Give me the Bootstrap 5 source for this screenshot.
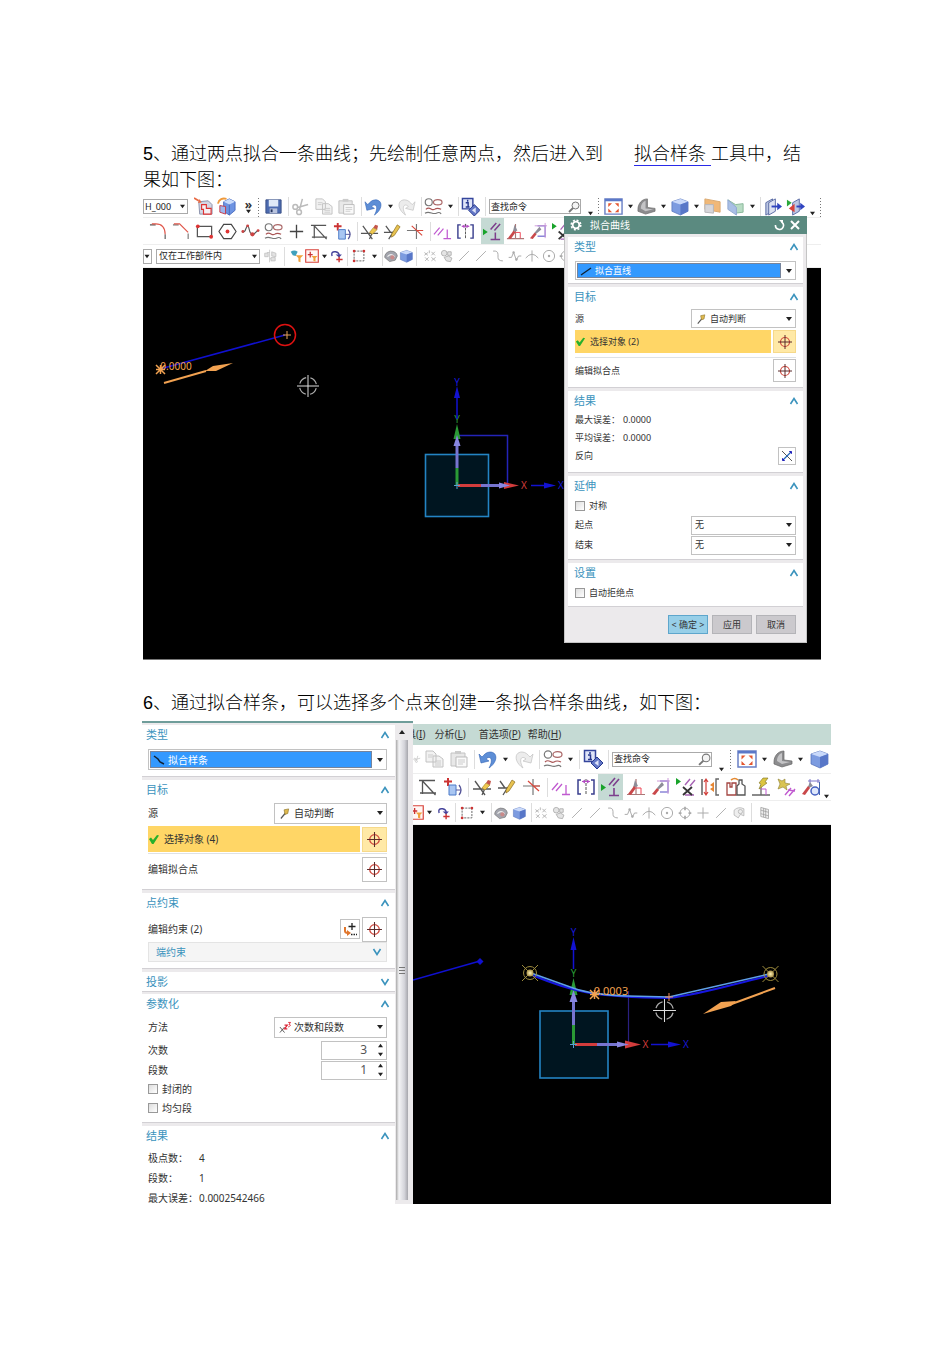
<!DOCTYPE html>
<html lang="zh-CN">
<head>
<meta charset="utf-8">
<meta name="viewport" content="width=device-width, initial-scale=1">
<title>拟合曲线</title>
<link href="https://cdn.jsdelivr.net/npm/bootstrap@5.3.0/dist/css/bootstrap.min.css" rel="stylesheet">
<style>
body{font-family:"Noto Sans","Noto Sans CJK SC",sans-serif;color:#333;background:#fff}
.sheet{padding:141px 119px 141px 143px}
.prose{font:300 18px/26px "Liberation Sans","Noto Sans CJK SC",sans-serif;color:#000;margin:0}
.prose-a{padding-right:20px;margin-bottom:3px}
.prose-b{margin:30px 0 5px}
.prose a{color:#000;text-decoration:none;border-bottom:1px solid #2a2ae8;margin-left:31px;padding-bottom:1px;white-space:pre}
.shot-a{margin-right:10px;border-bottom:1px solid #777}
.shot-a,.shot-b{overflow:hidden}
.shot-b{margin-left:-1px}
/* toolbars */
.strip{--b:23px;--c:10px;--i:19px;--s:15px;--sm:17px;--fs:9px;height:24px;background:#fff;border-bottom:1px solid #eee;white-space:nowrap;overflow:hidden}
.shot-b .strip{--b:25px;--c:11px;--i:20px;--s:17px;--sm:18px;--fs:10px;height:27px}
.strip>*{flex:none}
.strip button{border:0;background:none;padding:0;display:flex;align-items:center;justify-content:center;width:var(--b);height:100%}
.strip button svg{width:var(--i);height:var(--i)}
.strip button.s{width:var(--s)}
.strip button.s svg,.strip button.g svg{width:14px;height:14px}
.strip button.g{width:var(--sm)}
.strip button.m{width:21px}
.strip button.cr{width:var(--c)}
.strip button.cr svg{width:5px;height:5px}
.strip button.low{align-items:end;padding-bottom:1px}
.strip button.cutoff{width:8px;justify-content:end;overflow:hidden}
.strip button.on{background:#c5dad4}
.bar{width:4px;height:19px;border-right:1px solid #ddd;margin-right:0}
.grip{width:7px;height:20px;background:radial-gradient(circle,#777 0 1px,transparent 1px) 50% 0/3px 3px repeat-y}
.more{width:13px;font-size:12px;line-height:9px;font-weight:700;text-align:center}
.boxed{border:1px solid #aaa;height:15px;display:flex;align-items:center;background:#fff;font-size:var(--fs)}
.boxed select,.boxed input{border:0;background:none;appearance:none;outline:0;padding:0 0 0 1px;flex:1;min-width:0;color:#222;font-size:var(--fs);line-height:12px}
.boxed.range select{padding-left:2px}
.boxed svg{flex:none}
.seek{width:92px;margin-left:3px}
.seek input{font-size:9px}
.shot-b .seek{width:100px}
/* dialogs */
.dlg{--fs:9px;font-size:var(--fs);line-height:14px;background:#eceaec;color:#333}
.dlg-a{position:absolute;top:20px;right:14px;width:243px;border:1px solid #c4c4c4;border-top:0;padding-bottom:8px}
.dlg-b{--fs:10px;width:271px;border-top:2px solid #6f9d9a;flex:none;height:483px;overflow:hidden;padding-top:2px}
.cap{height:18px;background:#5b8a80;color:#fff;font-size:10px;padding:0 5px 0 6px;margin:0 -1px}
.cap button{border:0;background:none;padding:0;display:flex;width:15px;height:14px;align-items:center;justify-content:center}
.sec{background:#fff;padding:0 7px 4px;border-bottom:1px solid #d2d0d4;margin-bottom:3px}
.dlg-a .sec{margin:3px}
.dlg-a .sec.kind{padding-bottom:3px}
.dlg-a .sec.errs{padding-bottom:7px}
.sec h2{font-size:11px;line-height:20px;color:#3b93bd;margin:0 -3px 0 -1px;font-weight:400;display:flex;justify-content:space-between;align-items:center}
.dlg-b .sec h2{margin-left:-2px}
.dlg-b .sec{padding:0 8px 5px 6px}
.dlg-b .sec.kind{padding-bottom:6px}
.dlg-b .sec.folded{padding-bottom:0;margin-bottom:2px}
.dlg-b .sec.folded h2{line-height:19px}
.line{display:flex;align-items:center;justify-content:space-between}
.h-18{height:18px}.h-19{height:19px}.h-20{height:20px}.h-23{height:23px}.h-26{height:26px}.h-31{height:31px}
.pick{display:flex;align-items:center;border:1px solid #c2c2c2;background:#fff;height:19px;padding-right:3px;width:105px}
.dlg-b .pick{height:21px;width:113px}
.dlg .pick.wide{width:100%}
.pick .hold{flex:1;display:flex;align-items:center;height:100%;min-width:0;padding-left:4px}
.pick select{appearance:none;border:0;background:none;flex:1;min-width:0;padding:0 0 0 3px;outline:0;font-size:var(--fs);line-height:14px;color:#333}
.pick.bare .hold{padding-left:0}
.pick.wide .hold{background:#3399ff;border:1px solid #76849c;margin:1px 5px 1px 1px;height:15px;padding-left:2px}
.dlg-b .pick.wide .hold{height:17px}
.pick.wide select{color:#fff}
.chosen{background:#ffd666;flex:1;height:100%;display:flex;align-items:center;gap:4px;margin-right:2px}
.aim{width:23px;height:23px;border:1px solid #c2c2c2;background:#fff;padding:0;display:flex;align-items:center;justify-content:center;flex:none}
.dlg-b .aim{width:25px;height:25px}
.aim.lit{background:#ffe9a6;border-color:#f6d98a}
.aim.tiny{width:18px;height:18px}
.dlg-b .aim.tiny{width:20px;height:20px}
.tick{appearance:none;width:10px;height:10px;border:1px solid #999;background:linear-gradient(135deg,#ddd,#fff);margin:0 4px 0 0;flex:none}
.foot{padding:5px 10px 0 0}
.foot button{width:40px;height:19px;font-size:9px;line-height:14px;border:1px solid #b4b4b8;background:#cbc9cd;color:#333;padding:0;border-radius:0}
.foot button.main{background:#97cfe8;border-color:#5ea6cc}
.sub{height:20px;border:1px solid #e4e4e4;background:#f5f5f5;color:#3b93bd;padding:0 4px 0 7px}
.spin{width:66px;height:19px;border:1px solid #c2c2c2;display:flex;align-items:center;padding-right:3px}
.spin input{flex:1;min-width:0;border:0;outline:0;text-align:right;font-size:12px;line-height:14px;color:#555;padding:0 11px 0 0;appearance:none}
.k{width:51px}
.ka{width:48px}
.rail{width:12px;flex:none;background:linear-gradient(90deg,#aaa,#f4f4f6 25%,#d4d4da 70%,#a6a6ac);margin:0 5px 4px 1px;border-top:15px solid #eceaec;position:relative}
.rail svg{position:absolute;left:3px;top:-11px}
.rail i{position:absolute;left:3px;top:227px;width:6px;height:7px;background:repeating-linear-gradient(#777 0 1px,transparent 1px 3px)}
.menus{background:#c5dad4;height:21px;margin-top:3px;font-size:10px;overflow:hidden;white-space:nowrap}
.menus a{color:#333;text-decoration:none}
.scene{display:block;width:100%;background:#000;flex:none}
</style>
<script src="https://cdn.jsdelivr.net/npm/bootstrap@5.3.0/dist/js/bootstrap.bundle.min.js"></script>
</head>
<body>
<svg width="0" height="0" class="position-absolute" aria-hidden="true">
<defs>
<linearGradient id="gb" x1="0" y1="0" x2="1" y2="1"><stop stop-color="#d5e3fb"/><stop offset="1" stop-color="#6f93dc"/></linearGradient>
<linearGradient id="gg" x1="0" y1="0" x2="0" y2="1"><stop stop-color="#bbb"/><stop offset="1" stop-color="#666"/></linearGradient>
<radialGradient id="gy"><stop stop-color="#fff3b8"/><stop offset="1" stop-color="#a58d45"/></radialGradient>
</defs>
<symbol id="dn" viewBox="0 0 6 6"><path d="M0 1h6L3 5z" fill="#222"/></symbol>
<symbol id="up" viewBox="0 0 6 6"><path d="M0 5h6L3 1z" fill="#222"/></symbol>
<symbol id="chev" viewBox="0 0 10 8"><path d="M1.500 7L5 1.500 8.500 7" fill="none" stroke="#3b93bd" stroke-width="1.600"/></symbol>
<symbol id="asm" viewBox="0 0 20 20"><path d="M5 5l10-1 4 4v10H6z" fill="#d3d6e4" stroke="#8a90ab"/><path d="M8 8h5v4h5v6h-8v-5H8z" fill="#f6f0f4" stroke="#d33" stroke-width="1.200"/><path d="M0 1l5 3" stroke="#e86b45" stroke-width="1.800"/><path d="M6 2l2 4-4 0z" fill="#e86b45"/></symbol>
<symbol id="box3" viewBox="0 0 20 20"><path d="M7 5l6-3 6 3v9l-6 5-6-4z" fill="#6d93e2" stroke="#4a6dc0"/><path d="M7 5l6-3 6 3-6 3z" fill="#c9dbfb"/><path d="M13 8v11" fill="none" stroke="#4a6dc0"/><path d="M3 9l6 1v8l-6-2z" fill="#9fb6ee" stroke="#c43a4a"/><path d="M1 7c1-5 5-6 9-5" stroke="#ef9a3c" stroke-width="2" fill="none"/></symbol>
<symbol id="save" viewBox="0 0 20 20"><path d="M2 3h16v14H2z" fill="#4c6bb0" stroke="#3a4f86"/><path d="M5 3h10v7H5z" fill="#dfe9f7"/><path d="M6 12h8v5H6z" fill="#b9c3dd"/><path d="M7 13h2v3H7z" fill="#26365f"/></symbol>
<symbol id="cut" viewBox="0 0 20 20"><g fill="none" stroke="#bbb" stroke-width="1.600"><path d="M12 2L9 13M18 8L7 11"/><circle cx="4.500" cy="10.500" r="2.500"/><circle cx="8.500" cy="16" r="2.500"/></g></symbol>
<symbol id="copy" viewBox="0 0 20 20"><path d="M2 2h7l3 3v8H2zM9 7h6l4 3v8H9z" fill="#f2f2f2" stroke="#c2c2c2"/><path d="M4 6h5M4 8h4M11 12h6M11 14h6M11 16h6" stroke="#ccc"/></symbol>
<symbol id="paste" viewBox="0 0 20 20"><path d="M2 4h14v13H2z" fill="#e8e8e8" stroke="#c2c2c2"/><path d="M6 2h6v3H6z" fill="#ccc"/><path d="M7 8h11v10H7z" fill="#fafafa" stroke="#bbb"/><path d="M9 11h7M9 13h7M9 15h5" stroke="#ccc"/></symbol>
<symbol id="undo" viewBox="0 0 20 20"><path d="M1 5l2 9 8-2-3-2c4-4 8 0 3 9 9-6 9-16 1-16-4 0-6 3-8 5z" fill="#5d8ed6" stroke="#2f62b5" stroke-width=".6"/></symbol>
<symbol id="redo" viewBox="0 0 20 20"><path d="M19 5l-2 9-8-2 3-2c-4-4-8 0-3 9-9-6-9-16-1-16 4 0 6 3 8 5z" fill="#ececec" stroke="#c6c6c6" stroke-width=".8"/></symbol>
<symbol id="curves" viewBox="0 0 20 20"><g fill="none" stroke="#777" stroke-width="1.200"><circle cx="5" cy="5.500" r="3.700"/><ellipse cx="14.500" cy="5.500" rx="4.500" ry="2.800" stroke="#a66"/><path d="M2 13c4-4 6 2 9 0s5-1 7 0" stroke="#a55"/><path d="M1 17c5-3 8 2 12 0 2-1 4-1 5 1"/></g></symbol>
<symbol id="info" viewBox="0 0 20 20"><path d="M1.500 1.500h11v11h-11z" fill="#dfe4f8" stroke="#34459c" stroke-width="1.500"/><path d="M7 3v2M5 6h2.500v4M5 10.500h4" stroke="#26378e" stroke-width="1.500" fill="none"/><path d="M14 8l6 6-6 6-6-6z" fill="#6377c6" stroke="#27398f"/><path d="M15.500 11v6l-4-3z" fill="#dfe4f8"/></symbol>
<symbol id="fit" viewBox="0 0 20 20"><path d="M1 2h18v16H1z" fill="#fff" stroke="#6a80c5" stroke-width="1.500"/><path d="M1 2h18v2.500H1z" fill="#5b78c8"/><path d="M4.500 10.500V6.500h4zM15.500 10.500V6.500h-4zM4.500 12v4h4zM15.500 12v4h-4z" fill="#e4562f"/></symbol>
<symbol id="wedge" viewBox="0 0 20 20"><path d="M1 13C1 7 5 2 11 2v9l8 1v3l-10 3-8-3z" fill="#8c8c8e" stroke="#666" stroke-width=".7"/><path d="M4 12c0-4 2-7 5-8v8l8 1-8 2z" fill="#c4c4c6"/></symbol>
<symbol id="cube" viewBox="0 0 20 20"><path d="M2 5l9-3 8 3v10l-8 4-9-4z" fill="#7c9be0" stroke="#4f6cb6" stroke-width=".7"/><path d="M2 5l9-3 8 3-8 3z" fill="#c9d9fa"/><path d="M11 8l8-3v10l-8 4z" fill="#5877c8"/></symbol>
<symbol id="pl1" viewBox="0 0 20 20"><path d="M2 2l16 3v11l-16-3z" fill="#f0b878" stroke="#d9a970"/><path d="M2 8h9v9l-9-1z" fill="#d6d6da" stroke="#b5b5b8"/></symbol>
<symbol id="pl2" viewBox="0 0 20 20"><path d="M2 3l8 5 8-1v9l-8 1z" fill="#b8dcc4" stroke="#88b79a"/><path d="M2 3l9 8v8l-9-6z" fill="#a9bfe6" stroke="#8fa6d2"/></symbol>
<symbol id="ex1" viewBox="0 0 20 20"><path d="M3 6l7-4v13l-7 4z" fill="#bcc7e4" stroke="#5a6aa3"/><path d="M6 6l7-4v13l-7 4z" fill="#dde2f2" stroke="#5a6aa3"/><path d="M9 10h7" stroke="#2f44c0" stroke-width="2"/><path d="M15 6l5 4-5 4z" fill="#2f44c0"/></symbol>
<symbol id="ex2" viewBox="0 0 20 20"><path d="M7 6l7-4v13l-7 4z" fill="#bcc7e4" stroke="#5a6aa3"/><path d="M11 10h5" stroke="#2f44c0" stroke-width="2"/><path d="M15 6l5 4-5 4z" fill="#2f44c0"/><path d="M1 3l5 3-5 4z" fill="#2aa83a"/><path d="M3 12l6-5v9z" fill="#d8423a"/></symbol>
<symbol id="fil" viewBox="0 0 20 20"><path d="M1 3h6M17 13v5" stroke="#555" stroke-width="1.200"/><path d="M3 2h4q10 0 10 11" stroke="#e0564a" stroke-width="1.200" fill="none"/></symbol>
<symbol id="cha" viewBox="0 0 20 20"><path d="M1 3h6M17 12v6" stroke="#777" stroke-width="1.200"/><path d="M2 2h6l9 9" stroke="#e0564a" stroke-width="1.200" fill="none"/></symbol>
<symbol id="rct" viewBox="0 0 20 20"><path d="M2.500 4.500h15v11h-15z" fill="none" stroke="#555" stroke-width="1.300"/><circle cx="3" cy="4.500" r="2" fill="#d33"/><circle cx="17" cy="15.500" r="2" fill="#d33"/></symbol>
<symbol id="hex" viewBox="0 0 20 20"><path d="M6 2.500h8l5 7.500-5 7.500H6L1 10z" fill="none" stroke="#444" stroke-width="1.200"/><circle cx="10" cy="10" r="2" fill="#d33"/></symbol>
<symbol id="spl" viewBox="0 0 20 20"><path d="M1 10c4 3 4-6 6-6s1 9 5 9 3-4 7-4" fill="none" stroke="#555" stroke-width="1.200"/><g fill="#c44"><circle cx="2" cy="10" r="1.500"/><circle cx="7" cy="4" r="1.500"/><circle cx="12" cy="13" r="2.200"/><circle cx="18" cy="9" r="1.500"/></g></symbol>
<symbol id="plus" viewBox="0 0 20 20"><path d="M10 3v14M3 10h14" stroke="#444" stroke-width="1.400"/></symbol>
<symbol id="tri" viewBox="0 0 20 20"><path d="M1 3.500h16M4.500 3v14M2 16h16M4.500 4l13 14" stroke="#555" stroke-width="1.300" fill="none"/></symbol>
<symbol id="off" viewBox="0 0 20 20"><path d="M1 4.500h8M5 1v8" stroke="#c33" stroke-width="2"/><path d="M6 8h7v10H6z" fill="#a9c6f2" stroke="#4c7bc8"/><path d="M16 8q4 5 0 10" stroke="#559" stroke-width="1.300" fill="none"/><path d="M13 13h5" stroke="#559"/></symbol>
<symbol id="tr1" viewBox="0 0 20 20"><path d="M1 12h18M3 4l10 14M10 18l4-9" stroke="#555" stroke-width="1.300" fill="none"/><path d="M10 11l4-5 4 2-5 5z" fill="#eec74f" stroke="#9a7c20" stroke-width=".6"/><path d="M14 6l2-3 3 1-1 4z" fill="#c4564a"/></symbol>
<symbol id="tr2" viewBox="0 0 20 20"><path d="M1 11h9M3 4l5 7M6 18l5-8" stroke="#555" stroke-width="1.300" fill="none"/><path d="M9 13L15 3l3 2-6 9-3 2z" fill="#e7c250" stroke="#8a6c20" stroke-width=".7"/></symbol>
<symbol id="crs" viewBox="0 0 20 20"><path d="M1 9h17M11 2v16" stroke="#777" stroke-width="1.200"/><path d="M6 4l11 10M11 9h7" stroke="#d9483b" stroke-width="1.200" fill="none"/></symbol>
<symbol id="pp" viewBox="0 0 20 20"><path d="M1 13l6-7M5 14l6-7" stroke="#c05ad0" stroke-width="1.300"/><path d="M15 8v9M11 17.500h8" stroke="#c05ad0" stroke-width="1.300"/></symbol>
<symbol id="mir" viewBox="0 0 20 20"><path d="M5 3H2v14h3M15 3h3v14h-3" fill="none" stroke="#3a3f8e" stroke-width="1.500"/><path d="M10 2v16" stroke="#555" stroke-dasharray="3 1"/><path d="M6 4.500h8" stroke="#b44dc4"/><path d="M9 2.500v4L6 4.500zM11 2.500v4l3-2z" fill="#b44dc4"/></symbol>
<symbol id="app" viewBox="0 0 20 20"><path d="M0 7l5 3.500L0 14z" fill="#18a32a"/><path d="M8 8l6-7M12 9l6-7" stroke="#7d3f8c" stroke-width="1.600"/><path d="M13 11v7M8 18.500h10" stroke="#7d3f8c" stroke-width="1.600"/></symbol>
<symbol id="br1" viewBox="0 0 20 20"><path d="M10 2v15M1 17.500h18" stroke="#a77" stroke-width="1.200"/><path d="M10 11h5v6" stroke="#e45" fill="none"/><path d="M9 3l3 6-5 2z" fill="#8d8d98"/><path d="M8 9l2 2-5 7-3-1z" fill="#c9484a"/></symbol>
<symbol id="br2" viewBox="0 0 20 20"><path d="M9 4h8v11H9" stroke="#8c86d8" stroke-width="1.500" fill="none"/><path d="M6 4h13M17 1v16" stroke="#cc9ad8"/><path d="M11 5l2 3-6 5-1-2z" fill="#8d8d98"/><path d="M6 11l2 2-4 5-3-1z" fill="#c9484a"/></symbol>
<symbol id="xpp" viewBox="0 0 20 20"><path d="M0 1l5 3.500L0 8z" fill="#18a32a"/><path d="M9 8l5-6M14 9l5-6M9 18h9" stroke="#a763b4" stroke-width="1.400" fill="none"/><path d="M7 10l9 8M16 10l-9 8" stroke="#333" stroke-width="1.800"/></symbol>
<symbol id="rbr" viewBox="0 0 20 20"><path d="M1 2v16" stroke="#555" stroke-width="1.400"/><path d="M5 2v16M3 5l2-3 2 3M3 15l2 3 2-3" stroke="#d23f3a" fill="none" stroke-width="1.200"/><path d="M18 2h-3v16h3" stroke="#666" fill="none" stroke-width="1.400"/><path d="M13 5v10l-4-3 3-2-3-2z" fill="#e68532"/></symbol>
<symbol id="btl" viewBox="0 0 20 20"><path d="M1 6h3v4h2V6h4v12H1z" fill="none" stroke="#a34440" stroke-width="1.300"/><path d="M11 18V9l2-2V3h3v4l3 2v9z" fill="none" stroke="#555" stroke-width="1.300"/><path d="M5 3q4-3 7 0" stroke="#e58a32" stroke-width="1.600" fill="none"/></symbol>
<symbol id="blt" viewBox="0 0 20 20"><path d="M10 8v10M1 18h18" stroke="#666" stroke-width="1.300"/><path d="M10 12h5v6" stroke="#c05ad0" fill="none"/><path d="M12 1l5 0-3 4 2 1-8 6 2-5-2-1z" fill="#dcc540" stroke="#7c7020" stroke-width=".6"/></symbol>
<symbol id="blw" viewBox="0 0 20 20"><path d="M2 2l4 2 3-2 0 4 5 1-4 2 1 4-4-3-5 2 2-5z" fill="#d9c453" stroke="#8d8034" stroke-width=".6"/><path d="M9 18l6-7M13 19l6-7M12 13l7 1" stroke="#c05ad0" stroke-width="1.400"/></symbol>
<symbol id="brc" viewBox="0 0 20 20"><path d="M9 2v6M17 2v4M7 4h12" stroke="#7a74c8" fill="none"/><path d="M18.500 5v13" stroke="#46a"/><circle cx="14" cy="14" r="4" fill="#dfe8fb" stroke="#4560c0" stroke-width="1.500"/><path d="M9 5l3 4-6 3z" fill="#8d8d98"/><path d="M7 9l2 2-5 7-3-1z" fill="#c9484a"/></symbol>
<symbol id="tre" viewBox="0 0 20 20"><path d="M8 1v18M8 5H4M8 14h4" stroke="#bbb" fill="none"/><path d="M1 6h5v5H1zM11 4l6 2v5l-6-1zM10 12h6v5h-6z" fill="#e2e2e2" stroke="#bbb"/></symbol>
<symbol id="fun" viewBox="0 0 20 20"><path d="M1 4q5-4 10 0l-3 6-4-1z" fill="#3fa0bc"/><path d="M8 9h11l-4 4v6l-3-1v-5z" fill="#f0a13c"/></symbol>
<symbol id="fpb" viewBox="0 0 20 20"><path d="M1 1h18v18H1z" fill="#fff6f4" stroke="#d8433b" stroke-width="1.600"/><path d="M4 8h7M7.500 4v8" stroke="#c33" stroke-width="1.800"/><path d="M9 10h9l-3 3v5l-3-1v-4z" fill="#f0a13c"/></symbol>
<symbol id="rot" viewBox="0 0 20 20"><path d="M3 10Q1 3 8 4q5 1 5 5" stroke="#45439b" fill="none" stroke-width="2"/><path d="M8 8h9l-4 4z" fill="#45439b"/><path d="M13 11v8M9 15h9" stroke="#c33" stroke-width="2"/></symbol>
<symbol id="dsh" viewBox="0 0 20 20"><path d="M3 3h14v14H3z" fill="none" stroke="#666" stroke-width="1.400" stroke-dasharray="3 1.500"/><g fill="#c33"><circle cx="3" cy="3" r="1.900"/><circle cx="17" cy="3" r="1.900"/><circle cx="3" cy="17" r="1.900"/></g></symbol>
<symbol id="bal" viewBox="0 0 20 20"><path d="M1 12q0-7 8-9 9 0 10 7l-3 6-8 2z" fill="#a3a5ae" stroke="#777"/><path d="M5 11q5-6 10 0" stroke="#eee" fill="none" stroke-width="1.500"/><circle cx="12" cy="12" r="3" fill="#c98a8a"/></symbol>
<symbol id="dts" viewBox="0 0 20 20"><g fill="none" stroke="#b2b2b2" stroke-width="1.300"><path d="M2 5l5 4M7 5L2 9M12 4l5 5M17 4l-5 5M3 12l5 5M8 12l-5 5M12 12l6 5M18 12l-6 5M9 2v4"/></g></symbol>
<symbol id="gcb" viewBox="0 0 20 20"><g fill="#e4e4e4" stroke="#aaa" stroke-width="1.200"><circle cx="6" cy="6" r="4"/><path d="M11 4h5v5h-5zM6 12l6-2 5 3-2 5-6-1z"/></g></symbol>
<symbol id="ln" viewBox="0 0 20 20"><path d="M3 17L17 3" stroke="#aaa" stroke-width="1.300"/></symbol>
<symbol id="sc" viewBox="0 0 20 20"><path d="M3 3q7-1 7 5v4q0 5 7 5" stroke="#aaa" stroke-width="1.400" fill="none"/></symbol>
<symbol id="zz" viewBox="0 0 20 20"><path d="M1 12h4l3-7 4 11 3-6h4" stroke="#aaa" stroke-width="1.400" fill="none"/><circle cx="8" cy="5" r="1.700" fill="#aaa"/><circle cx="12" cy="15" r="1.700" fill="#aaa"/></symbol>
<symbol id="ac" viewBox="0 0 20 20"><path d="M1 13q9-11 18 0M10 2v16" stroke="#aaa" stroke-width="1.400" fill="none"/></symbol>
<symbol id="cd" viewBox="0 0 20 20"><circle cx="10" cy="10" r="8" stroke="#aaa" stroke-width="1.400" fill="none"/><circle cx="10" cy="10" r="1.700" fill="#aaa"/></symbol>
<symbol id="cq" viewBox="0 0 20 20"><circle cx="10" cy="10" r="7" stroke="#aaa" stroke-width="1.400" fill="none"/><path d="M10 1v5M10 14v5M1 10h4M15 10h4" stroke="#aaa" stroke-width="2.500"/></symbol>
<symbol id="gp" viewBox="0 0 20 20"><path d="M10 2v16M2 10h16" stroke="#aaa" stroke-width="1.400"/></symbol>
<symbol id="sf" viewBox="0 0 20 20"><path d="M3 6q6-6 14-2v10l-5-2-3 5-6-4z" fill="#eee" stroke="#aaa"/><circle cx="12" cy="8" r="3" fill="none" stroke="#aaa"/></symbol>
<symbol id="gr" viewBox="0 0 20 20"><path d="M4 2l11 3v13L4 15zM8 3v13M11 4v13M4 6l11 3M4 11l11 3" fill="#eee" stroke="#999"/></symbol>
<symbol id="mag" viewBox="0 0 12 12"><circle cx="7.500" cy="4.500" r="3.500" fill="#f4f4f4" stroke="#777"/><path d="M5 7l-4 4" stroke="#777" stroke-width="1.800"/></symbol>
<symbol id="target" viewBox="0 0 16 16"><circle cx="8" cy="8" r="4.500" fill="none" stroke="#d0473c" stroke-width="1.200"/><path d="M8 1v14M1 8h14" stroke="#5a2a2a"/></symbol>
<symbol id="wand" viewBox="0 0 12 12"><path d="M1 11l5-6 1 1-5 6z" fill="#555"/><path d="M5 2l5-1-1 5-3 1z" fill="#dfb94e" stroke="#8b7329" stroke-width=".7"/></symbol>
<symbol id="ok" viewBox="0 0 12 12"><path d="M1 6l2-1.500L5 7l4-5 2 .5L5.500 11H4z" fill="#27b02c"/></symbol>
<symbol id="cross" viewBox="0 0 24 24"><path d="M12 1v22M1 12h22" stroke="#ddd" stroke-width="1"/><circle cx="12" cy="12" r="8.500" fill="none" stroke="#aaa" stroke-width="1.200" stroke-dasharray="9 4.350" stroke-dashoffset="-2.200"/></symbol>
</svg>

<main class="sheet">
<p class="prose prose-a">5、通过两点拟合一条曲线；先绘制任意两点，然后进入到<a href="#fit-spline">拟合样条 </a>工具中，结果如下图：</p>

<section class="shot-a position-relative">
 <div class="strip d-flex align-items-center" style="height:22px">
  <label class="boxed" style="width:45px"><select aria-label="图样"><option>H_000</option></select><svg width="9" height="5"><use href="#dn"/></svg></label>
  <button class="ms-1"><svg><use href="#asm"/></svg></button><button><svg><use href="#box3"/></svg></button>
  <span class="more ms-1">»<svg width="5" height="5" class="d-block mx-auto"><use href="#dn"/></svg></span><span class="grip"></span>
  <button><svg><use href="#save"/></svg></button><span class="bar"></span>
  <button><svg><use href="#cut"/></svg></button><button><svg><use href="#copy"/></svg></button><button><svg><use href="#paste"/></svg></button><span class="bar"></span>
  <button><svg><use href="#undo"/></svg></button><button class="cr"><svg><use href="#dn"/></svg></button><button><svg><use href="#redo"/></svg></button><span class="bar"></span>
  <button><svg><use href="#curves"/></svg></button><button class="cr"><svg><use href="#dn"/></svg></button><span class="bar"></span>
  <button><svg><use href="#info"/></svg></button><span class="bar"></span>
  <label class="boxed seek"><input type="text" aria-label="查找命令" value="查找命令"><svg width="12" height="12"><use href="#mag"/></svg></label>
  <button class="cr low ms-1"><svg><use href="#dn"/></svg></button><span class="grip"></span>
  <button><svg><use href="#fit"/></svg></button><button class="cr"><svg><use href="#dn"/></svg></button>
  <button><svg><use href="#wedge"/></svg></button><button class="cr"><svg><use href="#dn"/></svg></button>
  <button><svg><use href="#cube"/></svg></button><button class="cr"><svg><use href="#dn"/></svg></button>
  <button><svg><use href="#pl1"/></svg></button><button><svg><use href="#pl2"/></svg></button><button class="cr"><svg><use href="#dn"/></svg></button><span class="bar"></span>
  <button><svg><use href="#ex1"/></svg></button><button><svg><use href="#ex2"/></svg></button><button class="cr low"><svg><use href="#dn"/></svg></button><span class="grip"></span>
 </div>
 <div class="strip d-flex align-items-center ps-1" style="height:27px">
  <button><svg><use href="#fil"/></svg></button><button><svg><use href="#cha"/></svg></button><button><svg><use href="#rct"/></svg></button><button><svg><use href="#hex"/></svg></button><button><svg><use href="#spl"/></svg></button><button><svg><use href="#curves"/></svg></button><button><svg><use href="#plus"/></svg></button><button><svg><use href="#tri"/></svg></button><button><svg><use href="#off"/></svg></button><span class="bar"></span>
  <button><svg><use href="#tr1"/></svg></button><button><svg><use href="#tr2"/></svg></button><button><svg><use href="#crs"/></svg></button><span class="bar"></span>
  <button><svg><use href="#pp"/></svg></button><button><svg><use href="#mir"/></svg></button><button class="on ms-1"><svg><use href="#app"/></svg></button><button><svg><use href="#br1"/></svg></button><button><svg><use href="#br2"/></svg></button><button><svg><use href="#xpp"/></svg></button>
 </div>
 <div class="strip d-flex align-items-center" style="height:23px">
  <span class="boxed" style="width:9px"><svg width="6" height="5"><use href="#dn"/></svg></span>
  <label class="boxed range ms-1" style="width:104px"><select aria-label="选择范围"><option>仅在工作部件内</option></select><svg width="9" height="5"><use href="#dn"/></svg></label>
  <button class="m g"><svg><use href="#tre"/></svg></button><span class="bar me-1"></span>
  <button class="s"><svg><use href="#fun"/></svg></button><button class="s"><svg><use href="#fpb"/></svg></button><button class="cr"><svg><use href="#dn"/></svg></button><button class="s"><svg><use href="#rot"/></svg></button><span class="bar"></span>
  <button class="m g"><svg><use href="#dsh"/></svg></button><button class="cr"><svg><use href="#dn"/></svg></button><span class="bar"></span>
  <button class="s"><svg><use href="#bal"/></svg></button><button class="s"><svg><use href="#cube"/></svg></button><span class="bar me-1"></span>
  <button class="g"><svg><use href="#dts"/></svg></button><button class="g"><svg><use href="#gcb"/></svg></button><button class="g"><svg><use href="#ln"/></svg></button><button class="g"><svg><use href="#ln"/></svg></button><button class="g"><svg><use href="#sc"/></svg></button><button class="g"><svg><use href="#zz"/></svg></button><button class="g"><svg><use href="#ac"/></svg></button><button class="g"><svg><use href="#cd"/></svg></button><button class="g"><svg><use href="#cq"/></svg></button>
 </div>
 <svg class="scene" height="391" font-family="Noto Sans, sans-serif" text-anchor="middle">
  <path d="M17 101L142 67" stroke="#1010d0" stroke-width="1.500"/>
  <circle cx="142" cy="67" r="10.500" fill="none" stroke="#d11" stroke-width="1.500"/>
  <path d="M144 63v8M140 67h8" stroke="#e8a35a"/>
  <path d="M13 97l9 9M22 97l-9 9M17.500 97v9M13 101.500h9" stroke="#f2a251" stroke-width="1.500"/>
  <text x="33" y="102" font-size="10" fill="#f2a251">0.0000</text>
  <path d="M21 115l42-12" stroke="#f2a251" stroke-width="2"/><path d="M62 103l8-5 20-3-17 8z" fill="#f2a251"/>
  <use href="#cross" x="153" y="106" width="24" height="24"/>
  <g>
   <path d="M314 167.500h50.500V217" fill="none" stroke="#2424b8" stroke-width="1.500"/>
   <rect x="282.500" y="186.500" width="63" height="62" fill="#001520" stroke="#2384c4" stroke-width="1.600"/>
   <text x="314" y="118" font-size="10" fill="#1818d8">Y</text><text x="314" y="155" font-size="10" fill="#2a9a35">Y</text>
   <path d="M314 124v27M388 217.500h18" stroke="#1212d0" stroke-width="1.500"/><path d="M314 118l3 12h-6zM413 217.500l-12-3v6z" fill="#1212d0"/>
   <path d="M314 156l3.500 15h-7z" fill="#2a9a35"/><path d="M314 200v17" stroke="#2a9a35" stroke-width="3"/>
   <path d="M314 176v24" stroke="#7775d0" stroke-width="3"/><path d="M314 167l3.500 11h-7z" fill="#8886e0"/>
   <path d="M315 217.500h24" stroke="#d23c3c" stroke-width="3"/><path d="M338 217.500h20" stroke="#7775d0" stroke-width="3"/>
   <path d="M376 217.500l-15-3.500v7z" fill="#d23c3c"/><path d="M367 217.500l-11-3v6z" fill="#8886e0"/>
   <path d="M311 217.500h6M314 214v7" stroke="#58a0d0"/>
   <text x="381" y="221" font-size="10" fill="#d23c3c">X</text><text x="418" y="221" font-size="10" fill="#1818d8">X</text>
  </g>
 </svg>

 <form class="dlg dlg-a">
  <header class="cap d-flex align-items-center">
   <svg width="12" height="12" viewBox="0 0 12 12"><circle cx="6" cy="6" r="3.300" fill="none" stroke="#fff" stroke-width="1.800"/><circle cx="6" cy="6" r="4.800" fill="none" stroke="#fff" stroke-width="1.500" stroke-dasharray="2 1.770"/></svg>
   <span class="ps-2 flex-grow-1">拟合曲线</span>
   <button type="button" aria-label="重置"><svg width="11" height="11" viewBox="0 0 11 11"><path d="M7.500 2a4 4 0 1 1-6 3" fill="none" stroke="#fff" stroke-width="1.600"/><path d="M5 0h4v4z" fill="#fff"/></svg></button>
   <button type="button" aria-label="关闭"><svg width="10" height="10" viewBox="0 0 10 10"><path d="M1 1l8 8M9 1L1 9" stroke="#fff" stroke-width="2"/></svg></button>
  </header>
  <section class="sec kind"><h2>类型<svg width="10" height="8"><use href="#chev"/></svg></h2>
   <div class="pick wide mt-1"><span class="hold"><svg width="12" height="10" viewBox="0 0 12 10"><path d="M1 9l10-7" stroke="#123" stroke-width="1.300"/></svg><select aria-label="类型"><option>拟合直线</option></select></span><svg width="6" height="6"><use href="#dn"/></svg></div></section>
  <section class="sec"><h2>目标<svg width="10" height="8"><use href="#chev"/></svg></h2>
   <div class="line h-23"><label for="a-src">源</label><span class="pick"><span class="hold"><svg width="11" height="10"><use href="#wand"/></svg><select id="a-src"><option>自动判断</option></select></span><svg width="6" height="6"><use href="#dn"/></svg></span></div>
   <div class="line h-23"><span class="chosen"><svg width="11" height="11"><use href="#ok"/></svg>选择对象 (2)</span><button type="button" class="aim lit" aria-label="选择对象"><svg width="16" height="16"><use href="#target"/></svg></button></div>
   <div class="line h-26 border-top mt-1"><span>编辑拟合点</span><button type="button" class="aim" aria-label="编辑拟合点"><svg width="16" height="16"><use href="#target"/></svg></button></div></section>
  <section class="sec errs"><h2>结果<svg width="10" height="8"><use href="#chev"/></svg></h2>
   <div class="line h-18 justify-content-start"><span class="ka">最大误差：</span><span>0.0000</span></div>
   <div class="line h-18 justify-content-start"><span class="ka">平均误差：</span><span>0.0000</span></div>
   <div class="line h-18"><span>反向</span><button type="button" class="aim tiny" aria-label="反向"><svg width="12" height="12" viewBox="0 0 12 12"><path d="M1 1l10 10" stroke="#555"/><path d="M2 10l8-8" stroke="#26b" stroke-width="1.200"/><path d="M8.500 1.500h2v2zM1.500 8.500v2h2z" fill="#22b" stroke="#22b"/></svg></button></div></section>
  <section class="sec"><h2>延伸<svg width="10" height="8"><use href="#chev"/></svg></h2>
   <div class="line h-19 justify-content-start"><input class="tick" type="checkbox" id="a-sym"><label for="a-sym">对称</label></div>
   <div class="line h-20"><label for="a-st">起点</label><span class="pick bare"><span class="hold"><select id="a-st"><option>无</option></select></span><svg width="6" height="6"><use href="#dn"/></svg></span></div>
   <div class="line h-20"><label for="a-en">结束</label><span class="pick bare"><span class="hold"><select id="a-en"><option>无</option></select></span><svg width="6" height="6"><use href="#dn"/></svg></span></div></section>
  <section class="sec"><h2>设置<svg width="10" height="8"><use href="#chev"/></svg></h2>
   <div class="line h-19 justify-content-start"><input class="tick" type="checkbox" id="a-rej"><label for="a-rej">自动拒绝点</label></div></section>
  <div class="foot d-flex justify-content-end gap-1"><button type="button" class="main">&lt; 确定 &gt;</button><button type="button">应用</button><button type="button">取消</button></div>
 </form>
</section>

<p class="prose prose-b">6、通过拟合样条，可以选择多个点来创建一条拟合样条曲线，如下图：</p>

<section class="shot-b d-flex" id="fit-spline">
 <form class="dlg dlg-b d-flex">
  <div class="flex-grow-1">
  <section class="sec kind"><h2>类型<svg width="10" height="8"><use href="#chev"/></svg></h2>
   <div class="pick wide mt-1"><span class="hold"><svg width="12" height="10" viewBox="0 0 12 10"><path d="M1 1l4 3 2 3 4 2" stroke="#123" stroke-width="1.500" fill="none"/></svg><select aria-label="类型"><option>拟合样条</option></select></span><svg width="6" height="6"><use href="#dn"/></svg></div></section>
  <section class="sec"><h2>目标<svg width="10" height="8"><use href="#chev"/></svg></h2>
   <div class="line h-26"><label for="b-src">源</label><span class="pick"><span class="hold"><svg width="12" height="11"><use href="#wand"/></svg><select id="b-src"><option>自动判断</option></select></span><svg width="6" height="6"><use href="#dn"/></svg></span></div>
   <div class="line h-26"><span class="chosen"><svg width="12" height="12"><use href="#ok"/></svg>选择对象 (4)</span><button type="button" class="aim lit" aria-label="选择对象"><svg width="17" height="17"><use href="#target"/></svg></button></div>
   <div class="line h-31 border-top" style="margin-top:1px"><span>编辑拟合点</span><button type="button" class="aim" aria-label="编辑拟合点"><svg width="17" height="17"><use href="#target"/></svg></button></div></section>
  <section class="sec kind"><h2>点约束<svg width="10" height="8"><use href="#chev"/></svg></h2>
   <div class="line h-26" style="margin-top:3px"><span class="flex-grow-1">编辑约束 (2)</span><button type="button" class="aim tiny" style="margin-right:2px" aria-label="添加约束"><svg width="14" height="14" viewBox="0 0 14 14"><path d="M9 1v7M5.500 4.500h7" stroke="#222" stroke-width="1.300"/><path d="M2 5v4q0 2 3 2" stroke="#e0762c" stroke-width="2" fill="none"/><path d="M4 8l4 3-4 3z" fill="#e0762c"/><path d="M8 12.500h6" stroke="#222" stroke-width="1.500" stroke-dasharray="1.500 1"/></svg></button><button type="button" class="aim" aria-label="编辑约束"><svg width="17" height="17"><use href="#target"/></svg></button></div>
   <div class="sub d-flex align-items-center justify-content-between">端约束<svg width="10" height="8" viewBox="0 0 10 8"><path d="M1.500 1L5 6.500 8.500 1" fill="none" stroke="#3b93bd" stroke-width="1.600"/></svg></div></section>
  <section class="sec folded"><h2>投影<svg width="10" height="8" viewBox="0 0 10 8"><path d="M1.500 1L5 6.500 8.500 1" fill="none" stroke="#3b93bd" stroke-width="1.600"/></svg></h2></section>
  <section class="sec"><h2>参数化<svg width="10" height="8"><use href="#chev"/></svg></h2>
   <div class="line h-26"><label for="b-m">方法</label><span class="pick"><span class="hold"><svg width="12" height="13" viewBox="0 0 13 13"><path d="M1 6l5 6M6 6l-5 6" stroke="#555"/><path d="M6 4h3L6 8h3" stroke="#d23" fill="none" stroke-width="1.300"/><path d="M10 1h2.500L11 3q3 1-1 3" stroke="#d23" fill="none"/></svg><select id="b-m"><option>次数和段数</option></select></span><svg width="6" height="6"><use href="#dn"/></svg></span></div>
   <div class="line h-20"><label for="b-d">次数</label><span class="spin"><input type="text" id="b-d" value="3"><span class="d-flex flex-column gap-1"><svg width="5" height="5"><use href="#up"/></svg><svg width="5" height="5"><use href="#dn"/></svg></span></span></div>
   <div class="line h-20"><label for="b-s">段数</label><span class="spin"><input type="text" id="b-s" value="1"><span class="d-flex flex-column gap-1"><svg width="5" height="5"><use href="#up"/></svg><svg width="5" height="5"><use href="#dn"/></svg></span></span></div>
   <div class="line h-18 justify-content-start"><input class="tick" type="checkbox" id="b-c"><label for="b-c">封闭的</label></div>
   <div class="line h-19 justify-content-start"><input class="tick" type="checkbox" id="b-e"><label for="b-e">均匀段</label></div></section>
  <section class="sec border-0 mb-0 pb-0"><h2>结果<svg width="10" height="8"><use href="#chev"/></svg></h2>
   <div class="line h-20 justify-content-start" style="margin-top:2px"><span class="k">极点数：</span><span>4</span></div>
   <div class="line h-20 justify-content-start"><span class="k">段数：</span><span>1</span></div>
   <div class="line h-20 justify-content-start"><span class="k text-nowrap">最大误差：</span><span>0.0002542466</span></div></section>
  </div>
  <div class="rail"><svg width="6" height="6"><use href="#up"/></svg><i></i></div>
 </form>
 <div class="flex-grow-1 overflow-hidden">
  <nav class="menus d-flex align-items-center"><a href="#" style="margin:0 9px 0 -7px">具(<u>I</u>)</a><a href="#" style="margin-right:13px">分析(<u>L</u>)</a><a href="#" style="margin-right:7px">首选项(<u>P</u>)</a><a href="#">帮助(<u>H</u>)</a></nav>
  <div class="strip d-flex align-items-center" style="height:29px">
   <button class="cutoff"><svg><use href="#cut"/></svg></button><button><svg><use href="#copy"/></svg></button><button><svg><use href="#paste"/></svg></button><span class="bar"></span>
   <button><svg><use href="#undo"/></svg></button><button class="cr"><svg><use href="#dn"/></svg></button><button><svg><use href="#redo"/></svg></button><span class="bar"></span>
   <button><svg><use href="#curves"/></svg></button><button class="cr"><svg><use href="#dn"/></svg></button><span class="bar"></span>
   <button><svg><use href="#info"/></svg></button><span class="bar"></span>
   <label class="boxed seek"><input type="text" aria-label="查找命令" value="查找命令"><svg width="13" height="13"><use href="#mag"/></svg></label>
   <button class="cr low ms-1"><svg><use href="#dn"/></svg></button><span class="grip"></span>
   <button><svg><use href="#fit"/></svg></button><button class="cr"><svg><use href="#dn"/></svg></button><button><svg><use href="#wedge"/></svg></button><button class="cr"><svg><use href="#dn"/></svg></button><button><svg><use href="#cube"/></svg></button>
  </div>
  <div class="strip d-flex align-items-center" style="padding-left:2px">
   <button><svg><use href="#tri"/></svg></button><button><svg><use href="#off"/></svg></button><span class="bar"></span>
   <button><svg><use href="#tr1"/></svg></button><button><svg><use href="#tr2"/></svg></button><button><svg><use href="#crs"/></svg></button><span class="bar"></span>
   <button><svg><use href="#pp"/></svg></button><button><svg><use href="#mir"/></svg></button><button class="on"><svg><use href="#app"/></svg></button><button><svg><use href="#br1"/></svg></button><button><svg><use href="#br2"/></svg></button><button><svg><use href="#xpp"/></svg></button><button><svg><use href="#rbr"/></svg></button><button><svg><use href="#btl"/></svg></button><button><svg><use href="#blt"/></svg></button><button><svg><use href="#blw"/></svg></button><button><svg><use href="#brc"/></svg></button><button class="cr low" style="width:6px"><svg><use href="#dn"/></svg></button>
  </div>
  <div class="strip d-flex align-items-center" style="height:24px">
   <button class="cutoff" style="width:11px"><svg style="width:15px;height:15px;flex:none"><use href="#fpb"/></svg></button><button class="cr"><svg><use href="#dn"/></svg></button><button class="s"><svg><use href="#rot"/></svg></button><span class="bar"></span>
   <button class="m g"><svg><use href="#dsh"/></svg></button><button class="cr"><svg><use href="#dn"/></svg></button><span class="bar"></span>
   <button class="g"><svg><use href="#bal"/></svg></button><button class="g"><svg><use href="#cube"/></svg></button><span class="bar"></span>
   <button class="g"><svg><use href="#dts"/></svg></button><button class="g"><svg><use href="#gcb"/></svg></button><button class="g"><svg><use href="#ln"/></svg></button><button class="g"><svg><use href="#ln"/></svg></button><button class="g"><svg><use href="#sc"/></svg></button><button class="g"><svg><use href="#zz"/></svg></button><button class="g"><svg><use href="#ac"/></svg></button><button class="g"><svg><use href="#cd"/></svg></button><button class="g"><svg><use href="#cq"/></svg></button><button class="g"><svg><use href="#gp"/></svg></button><button class="g"><svg><use href="#ln"/></svg></button><button class="g"><svg><use href="#sf"/></svg></button><span class="bar me-1"></span><button class="g"><svg><use href="#gr"/></svg></button>
  </div>
  <svg class="scene" height="379" font-family="Noto Sans, sans-serif" text-anchor="middle">
   <path d="M0 155L67 136" stroke="#1010d0" stroke-width="1.500"/><path d="M67 133l3.500 3.500L67 140l-3.500-3.500z" fill="#1010d0"/>
   <path d="M215.500 166v53" stroke="#2a2080" stroke-width="1.200"/>
   <rect x="127" y="186" width="68" height="67" fill="#001520" stroke="#2384c4" stroke-width="1.600"/>
   <text x="160.500" y="111" font-size="10" fill="#1818d8">Y</text><text x="160.500" y="152" font-size="10" fill="#2a9a35">Y</text>
   <path d="M160.500 124v20M238 219.500h20" stroke="#1212d0" stroke-width="1.500"/><path d="M160.500 112l3 13h-6zM268 219.500l-13-3v6z" fill="#1212d0"/>
   <path d="M160.500 153l4 17h-8z" fill="#2a9a35"/><path d="M160.500 199v20" stroke="#2a9a35" stroke-width="3"/>
   <path d="M160.500 174v26" stroke="#7775d0" stroke-width="3"/><path d="M160.500 165l4 12h-8z" fill="#8886e0"/>
   <path d="M162 219.500h24" stroke="#d23c3c" stroke-width="3"/><path d="M184 219.500h22" stroke="#7775d0" stroke-width="3"/>
   <path d="M228 219.500l-16-4v8z" fill="#d23c3c"/><path d="M216 219.500l-12-3v6z" fill="#8886e0"/>
   <path d="M157 219.500h7M160.500 216v7" stroke="#58a0d0"/>
   <text x="232.500" y="223" font-size="10" fill="#d23c3c">X</text><text x="273" y="223" font-size="10" fill="#1818d8">X</text>
   <path d="M119 150C160 167 180 172 256 173 290 169 320 159 355 151" fill="none" stroke="#1616e0" stroke-width="2"/>
   <path d="M118 148L160 163Q180 170 215 171L256 172 356 149" fill="none" stroke="#5fa0e8" stroke-width="1.500"/>
   <g fill="none" stroke="#9c8a3c"><circle cx="117" cy="148" r="6.500"/><circle cx="357.500" cy="149" r="6.500"/><path d="M109 140l16 16M125 140l-16 16M349.500 141l16 16M365.500 141l-16 16"/></g>
   <circle cx="117" cy="148" r="3.500" fill="url(#gy)"/><circle cx="357.500" cy="149" r="3.500" fill="url(#gy)"/>
   <path d="M177 165l9 9M186 165l-9 9M181.500 165v9M177 169.500h9" stroke="#f2a251" stroke-width="1.500"/>
   <text x="198" y="170" font-size="11" fill="#f2a251">0.0003</text>
   <path d="M256 168v8M252 172h8" stroke="#f08a5a"/>
   <use href="#cross" x="239" y="173" width="25" height="25"/>
   <path d="M362 163l-46 17" stroke="#f2a251" stroke-width="2"/><path d="M323 176l-5 5-28 8 18-12z" fill="#f2a251"/>
  </svg>
 </div>
</section>
</main>
</body>
</html>
